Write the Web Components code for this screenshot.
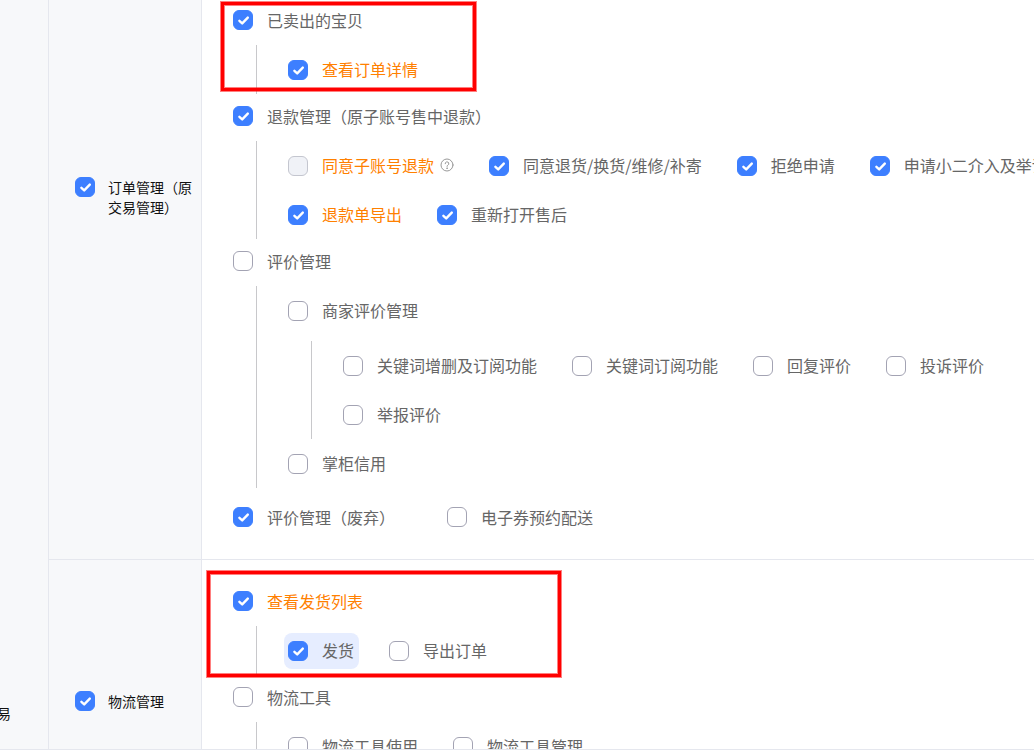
<!DOCTYPE html>
<html lang="zh-CN">
<head>
<meta charset="utf-8">
<title>权限管理</title>
<style>
  html, body { margin: 0; height: 100%; }
  body {
    background: #fff;
    color: #666;
    font: 400 16px/20px "Noto Sans CJK SC", sans-serif;
    overflow: hidden;
  }
</style>
</head>
<body>
<permission-page></permission-page>

<template id="check-tpl">
  <style>
    :host { display: block; flex: none; border-radius: 8px; }
    :host([tone="orange"]) { color: #ff8000; }
    :host([size="small"]) { flex: 0 1 auto; min-width: 0; color: #111; font-size: 14px; }
    :host([active]) { background: #e6edff; padding: 8px 5px 8px 4px; margin: -8px -5px -8px -4px; }
    label { display: flex; align-items: flex-start; gap: 14px; white-space: nowrap; }
    :host([size="small"]) label { white-space: normal; gap: 13px; }
    .box { display: grid; flex: none; width: 20px; height: 20px; }
    input {
      grid-area: 1 / 1; appearance: none; box-sizing: border-box; margin: 0;
      width: 20px; height: 20px; border: 1px solid #a3a3b3; border-radius: 6px; background: #fff;
    }
    input:checked { background: #3d7fff; border-color: #3d7fff; }
    input:disabled { background: #f0f2f7; border-color: #c4c6cf; }
    svg { grid-area: 1 / 1; width: 20px; height: 20px; pointer-events: none; visibility: hidden; }
    input:checked + svg { visibility: visible; }
    .text { display: flex; align-items: center; gap: 6px; line-height: var(--text-line, 20px); }
  </style>
  <label>
    <span class="box">
      <input type="checkbox">
      <svg viewBox="0 0 20 20" fill="none" stroke="#fff" stroke-width="2.4" stroke-linecap="round" stroke-linejoin="round" aria-hidden="true"><path d="M6.4 10.8 9.2 13.4 14.8 7.6"/></svg>
    </span>
    <span class="text"><slot></slot></span>
  </label>
</template>

<template id="row-tpl">
  <style>
    :host {
      --text-line: 18px;
      display: flex; box-sizing: border-box; align-items: flex-start; gap: 35px;
      height: 49px; padding-top: 15px;
    }
    :host([root]) { --text-line: 20px; gap: 52px; height: 47px; padding-top: 12px; }
    :host([apart]) { margin-top: 7px; }
  </style>
  <slot></slot>
</template>

<template id="branch-tpl">
  <style>
    :host { display: block; margin-left: 23px; padding-left: 31px; border-left: 1px solid #c8c8cb; }
    :host([nested]) { margin-top: 6px; }
  </style>
  <slot></slot>
</template>

<template id="section-tpl">
  <style>
    :host { display: flex; box-sizing: border-box; border-bottom: 1px solid #e5e7ee; }
    .category {
      display: flex; align-items: center; flex: none; box-sizing: border-box;
      width: 153px; padding: 0 6px 0 26px; background: #f7f8fa; border-right: 1px solid #e5e7ee;
    }
    .items { flex: 1; min-width: 0; padding: 19px 0 17px 31px; display: flex; flex-direction: column; overflow: hidden; }
    :host([bottom]) .items { justify-content: flex-end; }
  </style>
  <div class="category"><slot name="category"></slot></div>
  <div class="items"><slot></slot></div>
</template>

<template id="help-tpl">
  <style>
    :host { display: block; width: 14px; height: 14px; }
    svg { display: block; }
  </style>
  <svg width="14" height="14" viewBox="0 0 14 14" fill="none" stroke="#999" stroke-width="1" stroke-linecap="round" role="img" aria-label="help">
    <circle cx="7" cy="7" r="6"/>
    <path d="M5.2 5.7a1.8 1.8 0 1 1 2.7 1.5c-.6.4-.9.6-.9 1.2"/>
    <circle cx="7" cy="10.2" r=".3" fill="#999"/>
  </svg>
</template>

<template id="page-tpl">
  <style>
    :host { display: block; position: relative; height: 100vh; overflow: hidden; }
    .view {
      display: flex; box-sizing: border-box; height: calc(100% - 2px);
      overflow: hidden; border-bottom: 1px solid #e5e7ee;
    }
    .module {
      display: flex; align-items: flex-end; flex: none; box-sizing: border-box; width: 49px;
      padding-bottom: 26px; background: #f7f8fa; border-right: 1px solid #e5e7ee;
      color: #111; font-size: 14px;
    }
    .module span { display: flex; justify-content: flex-end; width: 11px; overflow: hidden; }
    .sections { flex: 1; min-width: 0; margin-top: -165px; }
    .orders { min-height: 725px; }
    .logistics { min-height: 283px; }
    .mark {
      position: absolute; box-sizing: border-box; border: 3px solid #f00; pointer-events: none;
      box-shadow: 0 0 0 1px #ff000080, inset 0 0 0 1px #ff000080;
    }
    .mark.sold { left: 221px; top: 2px; width: 255px; height: 89px; }
    .mark.ship { left: 207px; top: 571px; width: 354px; height: 106px; }
  </style>
  <div class="view">
    <div class="module"><span>易</span></div>
    <div class="sections">
      <perm-section class="orders" bottom>
        <perm-check slot="category" size="small" checked>订单管理（原交易管理）</perm-check>
        <perm-row root><perm-check checked>已卖出的宝贝</perm-check></perm-row>
        <perm-branch>
          <perm-row><perm-check tone="orange" checked>查看订单详情</perm-check></perm-row>
        </perm-branch>
        <perm-row root><perm-check checked>退款管理（原子账号售中退款）</perm-check></perm-row>
        <perm-branch>
          <perm-row>
            <perm-check tone="orange" disabled>同意子账号退款<help-icon></help-icon></perm-check>
            <perm-check checked>同意退货/换货/维修/补寄</perm-check>
            <perm-check checked>拒绝申请</perm-check>
            <perm-check checked>申请小二介入及举证</perm-check>
          </perm-row>
          <perm-row>
            <perm-check tone="orange" checked>退款单导出</perm-check>
            <perm-check checked>重新打开售后</perm-check>
          </perm-row>
        </perm-branch>
        <perm-row root><perm-check>评价管理</perm-check></perm-row>
        <perm-branch>
          <perm-row><perm-check>商家评价管理</perm-check></perm-row>
          <perm-branch nested>
            <perm-row>
              <perm-check>关键词增删及订阅功能</perm-check>
              <perm-check>关键词订阅功能</perm-check>
              <perm-check>回复评价</perm-check>
              <perm-check>投诉评价</perm-check>
            </perm-row>
            <perm-row><perm-check>举报评价</perm-check></perm-row>
          </perm-branch>
          <perm-row><perm-check>掌柜信用</perm-check></perm-row>
        </perm-branch>
        <perm-row root apart>
          <perm-check checked>评价管理（废弃）</perm-check>
          <perm-check>电子券预约配送</perm-check>
        </perm-row>
      </perm-section>
      <perm-section class="logistics">
        <perm-check slot="category" size="small" checked>物流管理</perm-check>
        <perm-row root><perm-check tone="orange" checked>查看发货列表</perm-check></perm-row>
        <perm-branch>
          <perm-row>
            <perm-check checked active>发货</perm-check>
            <perm-check>导出订单</perm-check>
          </perm-row>
        </perm-branch>
        <perm-row root><perm-check>物流工具</perm-check></perm-row>
        <perm-branch>
          <perm-row>
            <perm-check>物流工具使用</perm-check>
            <perm-check>物流工具管理</perm-check>
          </perm-row>
        </perm-branch>
      </perm-section>
    </div>
  </div>
  <div class="mark sold"></div>
  <div class="mark ship"></div>
</template>

<script>
  class TemplateElement extends HTMLElement {
    constructor() {
      super();
      const tpl = document.getElementById(this.constructor.template);
      this.attachShadow({ mode: "open" }).append(tpl.content.cloneNode(true));
    }
  }
  class PermCheck extends TemplateElement {
    static template = "check-tpl";
    connectedCallback() {
      const input = this.shadowRoot.querySelector("input");
      input.checked = this.hasAttribute("checked");
      input.disabled = this.hasAttribute("disabled");
    }
  }
  class PermRow extends TemplateElement { static template = "row-tpl"; }
  class PermBranch extends TemplateElement { static template = "branch-tpl"; }
  class PermSection extends TemplateElement { static template = "section-tpl"; }
  class HelpIcon extends TemplateElement { static template = "help-tpl"; }
  class PermissionPage extends TemplateElement { static template = "page-tpl"; }

  customElements.define("help-icon", HelpIcon);
  customElements.define("perm-check", PermCheck);
  customElements.define("perm-row", PermRow);
  customElements.define("perm-branch", PermBranch);
  customElements.define("perm-section", PermSection);
  customElements.define("permission-page", PermissionPage);
</script>
</body>
</html>
